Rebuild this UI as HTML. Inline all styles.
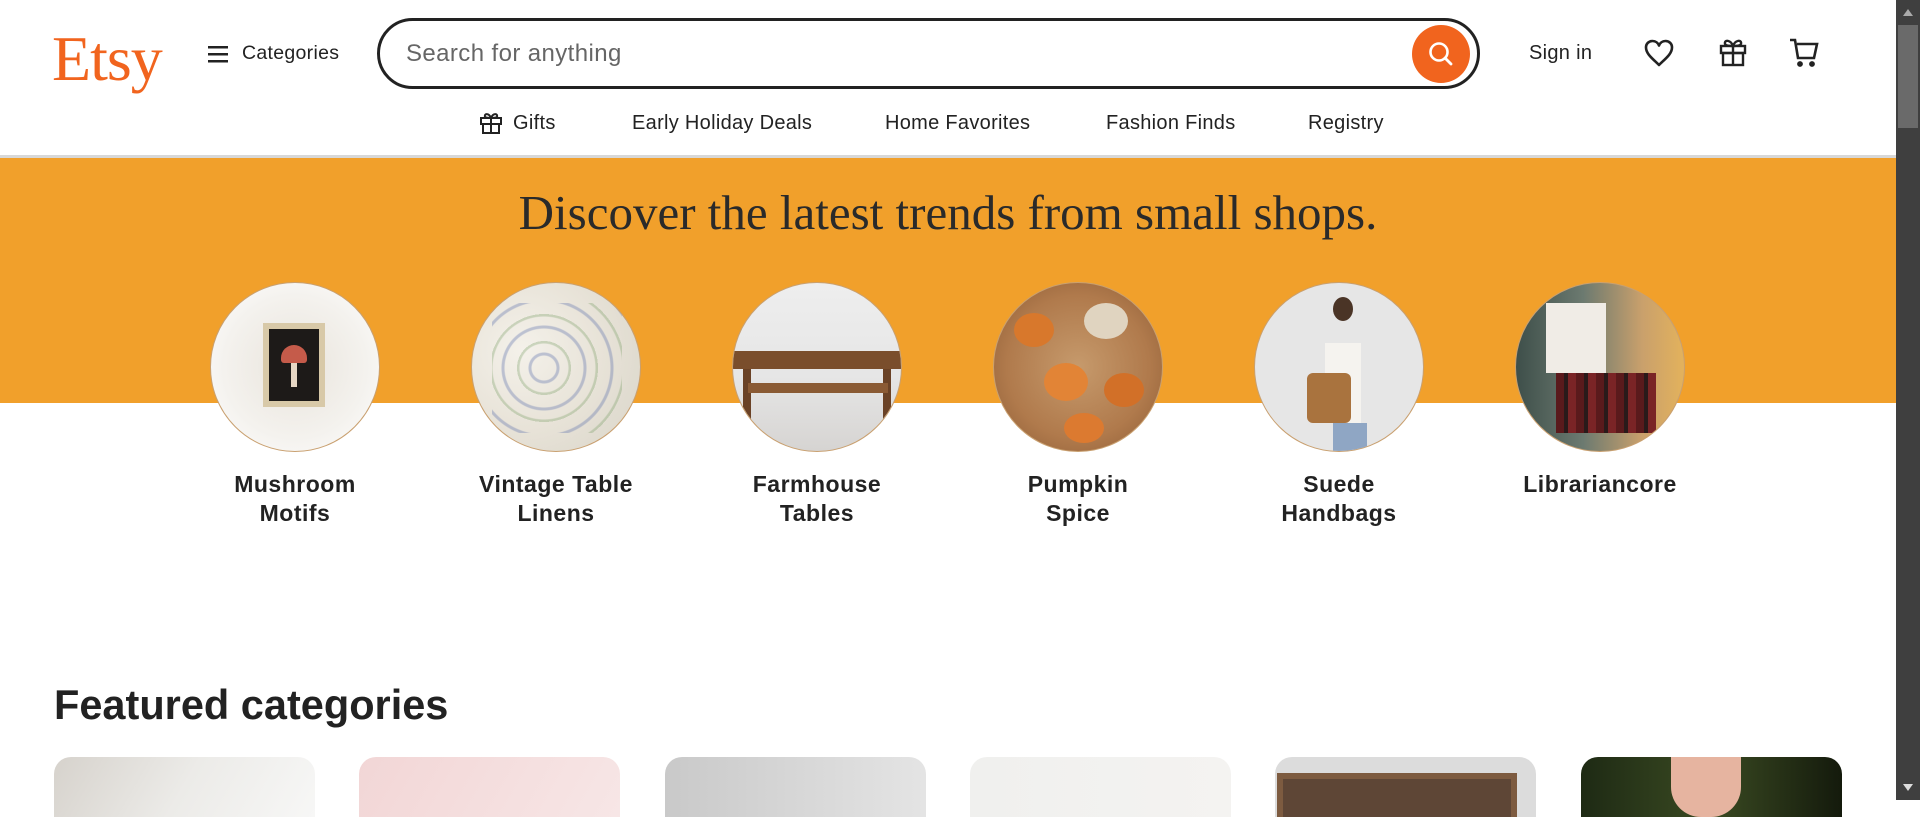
<!DOCTYPE html>
<html><head><meta charset="utf-8"><style>
*{margin:0;padding:0;box-sizing:border-box}
body{width:1920px;height:800px;overflow:hidden;background:#fff;font-family:"Liberation Sans",sans-serif;color:#222;position:relative}
.a{position:absolute}
.logo{left:52px;top:22px;font-family:"Liberation Serif",serif;font-size:64px;color:#f1641e;letter-spacing:-1px}
.nav{top:112px;font-size:20px;letter-spacing:.3px;color:#222;white-space:nowrap}
.circ{width:170px;height:170px;border-radius:50%;border:1px solid #c9a070;top:282px;overflow:hidden}
.lab{top:470px;width:260px;text-align:center;font-size:23px;font-weight:bold;letter-spacing:.5px;line-height:29px;color:#222}
.card{top:757px;width:261px;height:60px;border-radius:17px 17px 0 0;overflow:hidden}
</style></head><body>
<div class="a logo">Etsy</div>
<svg class="a" style="left:208px;top:45px" width="20" height="18" viewBox="0 0 20 18"><rect y="1" width="20" height="2.5" fill="#222"/><rect y="8" width="20" height="2.5" fill="#222"/><rect y="15" width="20" height="2.5" fill="#222"/></svg>
<div class="a" style="left:242px;top:42px;font-size:19.5px;letter-spacing:.3px">Categories</div>
<div class="a" style="left:377px;top:18px;width:1103px;height:71px;border:3px solid #222;border-radius:36px"></div>
<div class="a" style="left:406px;top:40px;font-size:24px;letter-spacing:.4px;color:#666">Search for anything</div>
<div class="a" style="left:1412px;top:25px;width:58px;height:58px;border-radius:50%;background:#f1641e"></div>
<svg class="a" style="left:1426px;top:39px" width="30" height="30" viewBox="0 0 30 30"><circle cx="13" cy="13" r="8.5" fill="none" stroke="#fff" stroke-width="2.6"/><path d="M19 19l6 6" stroke="#fff" stroke-width="2.8" stroke-linecap="round"/></svg>
<div class="a" style="left:1529px;top:42px;font-size:20px;letter-spacing:.3px">Sign in</div>
<svg class="a" style="left:1643px;top:38px" width="32" height="30" viewBox="0 0 32 30"><path d="M16 27C10 21 3 16 3 9.5 3 5.5 6 3 9.5 3 12.5 3 15 5 16 7.5 17 5 19.5 3 22.5 3 26 3 29 5.5 29 9.5 29 16 22 21 16 27z" fill="none" stroke="#222" stroke-width="2.6" stroke-linejoin="round"/></svg>
<svg class="a" style="left:1717px;top:36px" width="32" height="32" viewBox="0 0 32 32" fill="none" stroke="#222" stroke-width="2.4"><rect x="4" y="10" width="24" height="7"/><rect x="6" y="17" width="20" height="12"/><path d="M16 10v19"/><path d="M16 10c-2-6-9-7-8-2 1 2 6 2 8 2zM16 10c2-6 9-7 8-2-1 2-6 2-8 2z"/></svg>
<svg class="a" style="left:1788px;top:36px" width="34" height="32" viewBox="0 0 34 32" fill="none" stroke="#222" stroke-width="2.6"><path d="M2 4h5l3 18h16l3-14H9"/><circle cx="12" cy="28" r="1.6" fill="#222"/><circle cx="24" cy="28" r="1.6" fill="#222"/></svg>
<svg class="a" style="left:479px;top:111px" width="24" height="24" viewBox="0 0 24 24" fill="none" stroke="#222" stroke-width="2"><rect x="2" y="7" width="20" height="6"/><rect x="4" y="13" width="16" height="9"/><path d="M12 7v15M12 7c-2-5-7-5-6-1 1 1 4 1 6 1zM12 7c2-5 7-5 6-1-1 1-4 1-6 1z"/></svg>
<div class="a nav" style="left:513px">Gifts</div>
<div class="a nav" style="left:632px">Early Holiday Deals</div>
<div class="a nav" style="left:885px">Home Favorites</div>
<div class="a nav" style="left:1106px">Fashion Finds</div>
<div class="a nav" style="left:1308px">Registry</div>
<div class="a" style="left:0;top:155px;width:1896px;height:3px;background:#d8d8d8"></div>
<div class="a" style="left:0;top:158px;width:1896px;height:245px;background:#f1a02b"></div>
<div class="a" style="left:0;top:184px;width:1896px;text-align:center;font-family:'Liberation Serif',serif;font-size:49px;color:#2a2a2a">Discover the latest trends from small shops.</div>
<div class="a circ" style="left:210px;background:radial-gradient(circle at 50% 50%,#e9e4dc 0,#f4f2ee 60%,#fff 100%)"><div class="a" style="left:52px;top:40px;width:62px;height:84px;background:#d8c9a8;padding:6px"><div style="width:100%;height:100%;background:#1d1a18;position:relative"><div class="a" style="left:12px;top:16px;width:26px;height:18px;border-radius:13px 13px 3px 3px;background:#c55b4a"></div><div class="a" style="left:22px;top:34px;width:6px;height:24px;background:#e7d7c4"></div></div></div></div>
<div class="a circ" style="left:471px;background:radial-gradient(circle at 30% 40%,#f4f1ea 0,#e8e3d8 50%,#d8d4c8 100%)"><div class="a" style="left:20px;top:20px;width:130px;height:130px;background:repeating-radial-gradient(circle at 40% 50%,transparent 0 12px,rgba(90,110,170,.35) 13px 15px,transparent 16px 24px,rgba(110,150,90,.3) 25px 27px)"></div></div>
<div class="a circ" style="left:732px;background:linear-gradient(#eeeeee 0,#e6e6e6 55%,#d6d4d2 100%)"><div class="a" style="left:0;top:68px;width:170px;height:18px;background:#7a4e2c"></div><div class="a" style="left:10px;top:86px;width:8px;height:50px;background:#6a4226"></div><div class="a" style="left:150px;top:86px;width:8px;height:50px;background:#6a4226"></div><div class="a" style="left:15px;top:100px;width:140px;height:10px;background:#8a5a34"></div></div>
<div class="a circ" style="left:993px;background:radial-gradient(circle at 50% 50%,#c69a6c 0,#b07a4c 60%,#8a5a34 100%)"><div class="a" style="left:20px;top:30px;width:40px;height:34px;border-radius:50%;background:#d8782c"></div><div class="a" style="left:90px;top:20px;width:44px;height:36px;border-radius:50%;background:#e0d4c0"></div><div class="a" style="left:50px;top:80px;width:44px;height:38px;border-radius:50%;background:#e28436"></div><div class="a" style="left:110px;top:90px;width:40px;height:34px;border-radius:50%;background:#d27028"></div><div class="a" style="left:70px;top:130px;width:40px;height:30px;border-radius:50%;background:#dc7a30"></div></div>
<div class="a circ" style="left:1254px;background:#e6e6e6"><div class="a" style="left:70px;top:60px;width:36px;height:80px;background:#f5f3ef"></div><div class="a" style="left:52px;top:90px;width:44px;height:50px;border-radius:6px;background:#a9733e"></div><div class="a" style="left:78px;top:14px;width:20px;height:24px;border-radius:50%;background:#4a3426"></div><div class="a" style="left:78px;top:140px;width:34px;height:30px;background:#8fa6c4"></div></div>
<div class="a circ" style="left:1515px;background:linear-gradient(90deg,#3e4f4a 0,#6c7a70 40%,#c9a06c 75%,#e3b25c 100%)"><div class="a" style="left:40px;top:90px;width:100px;height:60px;background:repeating-linear-gradient(90deg,#5a1a1c 0 8px,#2a1a1a 8px 12px,#7a2426 12px 20px)"></div><div class="a" style="left:30px;top:20px;width:60px;height:70px;background:#f0ece6"></div></div>
<div class="a lab" style="left:165px">Mushroom<br>Motifs</div>
<div class="a lab" style="left:426px">Vintage Table<br>Linens</div>
<div class="a lab" style="left:687px">Farmhouse<br>Tables</div>
<div class="a lab" style="left:948px">Pumpkin<br>Spice</div>
<div class="a lab" style="left:1209px">Suede<br>Handbags</div>
<div class="a lab" style="left:1470px">Librariancore</div>
<div class="a" style="left:54px;top:681px;font-size:41.5px;font-weight:bold;color:#222">Featured categories</div>
<div class="a card" style="left:54px;background:linear-gradient(120deg,#d6d2cc 0,#ecebe8 50%,#f7f7f6 100%)"></div>
<div class="a card" style="left:359px;background:linear-gradient(120deg,#f2d6d6,#f7e6e6)"></div>
<div class="a card" style="left:665px;background:linear-gradient(90deg,#c9c9c9,#e4e4e4)"></div>
<div class="a card" style="left:970px;background:linear-gradient(90deg,#f0f0ee,#f4f3f1)"></div>
<div class="a card" style="left:1275px;background:#dcdcdc"><div class="a" style="left:2px;top:16px;width:240px;height:50px;background:#5e4636;border:6px solid #7d5b40"></div></div>
<div class="a card" style="left:1581px;background:linear-gradient(90deg,#1e2a14,#3a4a22 50%,#141a0c)"><div class="a" style="left:90px;top:0;width:70px;height:60px;border-radius:0 0 30px 30px;background:#e6b4a0"></div></div>
<div class="a" style="left:1896px;top:0;width:24px;height:800px;background:#3f3f3f"></div>
<div class="a" style="left:1898px;top:25px;width:20px;height:103px;background:#6a6a6a"></div>
<div class="a" style="left:1903px;top:9px;width:0;height:0;border-left:5px solid transparent;border-right:5px solid transparent;border-bottom:7px solid #aaa"></div>
<div class="a" style="left:1903px;top:784px;width:0;height:0;border-left:5px solid transparent;border-right:5px solid transparent;border-top:7px solid #ddd"></div>
</body></html>
